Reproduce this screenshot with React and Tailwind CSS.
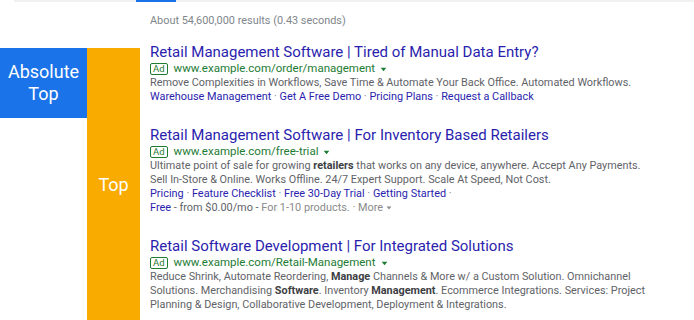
const ads = [
  {
    title: 'Retail Management Software | Tired of Manual Data Entry?',
    url: 'www.example.com/order/management',
    desc: [
      [['Remove Complexities in Workflows, Save Time & Automate Your Back Office. Automated Workflows.']],
    ],
    links: ['Warehouse Management', 'Get A Free Demo', 'Pricing Plans', 'Request a Callback'],
  },
  {
    title: 'Retail Management Software | For Inventory Based Retailers',
    url: 'www.example.com/free-trial',
    desc: [
      [['Ultimate point of sale for growing '], ['retailers', true], [' that works on any device, anywhere. Accept Any Payments.']],
      [['Sell In-Store & Online. Works Offline. 24/7 Expert Support. Scale At Speed, Not Cost.']],
    ],
    links: ['Pricing', 'Feature Checklist', 'Free 30-Day Trial', 'Getting Started'],
    trailingDot: true,
    price: true,
  },
  {
    title: 'Retail Software Development | For Integrated Solutions',
    url: 'www.example.com/Retail-Management',
    desc: [
      [['Reduce Shrink, Automate Reordering, '], ['Manage', true], [' Channels & More w/ a Custom Solution. Omnichannel']],
      [['Solutions. Merchandising '], ['Software', true], ['. Inventory '], ['Management', true], ['. Ecommerce Integrations. Services: Project']],
      [['Planning & Design, Collaborative Development, Deployment & Integrations.']],
    ],
  },
];

const Caret = ({ className }) => (
  <svg viewBox="0 0 10 6" className={className}>
    <path d="M1 0.5 L9 0.5 L5 5.5 Z" fill="currentColor" />
  </svg>
);

function Ad({ ad }) {
  return (
    <div className="flex flex-col">
      <div className="text-[15px] leading-[18px] text-[#2a1eae] whitespace-nowrap">{ad.title}</div>
      <div className="flex items-center h-[14px] mt-px whitespace-nowrap">
        <span className="border border-[#1e7b34] rounded-[2px] text-[#1e7b34] text-[9.5px] leading-[10px] px-[2px] mr-[6px]">Ad</span>
        <span className="text-[11.5px] text-[#1e7b34]">{ad.url}</span>
        <Caret className="w-[7px] h-[5px] ml-[5px] text-[#1e7b34]" />
      </div>
      {ad.desc.map((line, i) => (
        <div key={i} className="text-[10.85px] leading-[14px] text-[#5f6368] whitespace-nowrap">
          {line.map(([t, b], j) => (
            <span key={j} className={b ? 'font-bold text-[#3c4043]' : ''}>{t}</span>
          ))}
        </div>
      ))}
      {ad.links && (
        <div className="text-[10.9px] leading-[14px] text-[#2a1eae] whitespace-nowrap">
          {ad.links.map((l, i) => (
            <span key={l}>
              {i > 0 && <span className="text-[#80868b]"> · </span>}
              {l}
            </span>
          ))}
          {ad.trailingDot && <span className="text-[#80868b]"> ·</span>}
        </div>
      )}
      {ad.price && (
        <div className="flex items-center text-[10.9px] leading-[14px] whitespace-nowrap">
          <span className="text-[#2a1eae]">Free</span>
          <span className="text-[#5f6368]">&nbsp;- from $0.00/mo -&nbsp;</span>
          <span className="text-[#8a8a8a]">For 1-10 products. · More</span>
          <Caret className="w-[6px] h-[4px] ml-[3px] text-[#8a8a8a]" />
        </div>
      )}
    </div>
  );
}

export default function App() {
  return (
    <div className="w-[694px] h-[320px] bg-white overflow-hidden font-['Roboto',sans-serif]">
      <div className="ml-[14px] h-[2px] bg-[#f1f1f1] relative">
        <div className="absolute left-[122px] top-0 w-[40px] h-[2px] bg-[#1a73e8]" />
      </div>
      <div className="pl-[150px] mt-[12px] text-[10.9px] leading-[14px] text-[#80868b]">
        About 54,600,000 results (0.43 seconds)
      </div>
      <div className="flex mt-[20px] h-[272px]">
        <div className="w-[87px] h-[70px] bg-[#1a73e8] flex items-center justify-center text-center text-white text-[18px] leading-[22px]">
          Absolute<br />Top
        </div>
        <div className="w-[53px] bg-[#f9ab00] flex items-center justify-center text-white text-[18px]">
          Top
        </div>
        <div className="pl-[10px] -mt-[5px] flex flex-col gap-[22px]">
          {ads.map((ad) => (
            <Ad key={ad.url} ad={ad} />
          ))}
        </div>
      </div>
    </div>
  );
}
